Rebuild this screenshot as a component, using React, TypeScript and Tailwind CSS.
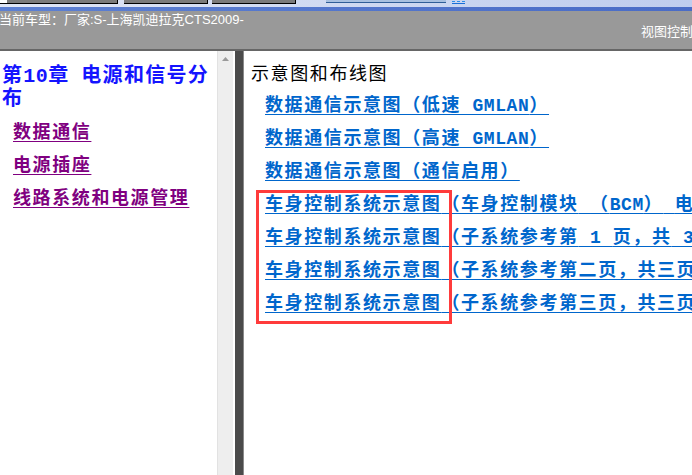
import React from "react";

// half-width latin runs use a fixed-width face, like the CJK system font does
function Lat({ children }: { children: React.ReactNode }) {
    return <span className="font-['Liberation_Mono',monospace] tracking-[0.6px] leading-none whitespace-pre">{children}</span>;
}

type Diagram = {
    main: React.ReactNode;
    rest?: React.ReactNode;
};

const diagrams: Diagram[] = [
    { main: <>数据通信示意图（低速<Lat> GMLAN</Lat>）</> },
    { main: <>数据通信示意图（高速<Lat> GMLAN</Lat>）</> },
    { main: <>数据通信示意图（通信启用）</> },
    { main: "车身控制系统示意图", rest: <>（车身控制模块<Lat> </Lat>（<Lat>BCM</Lat>）<Lat> </Lat>电源、搭铁和串行数据）</> },
    { main: "车身控制系统示意图", rest: <>（子系统参考第<Lat> 1 </Lat>页，共<Lat> 3 </Lat>页）</> },
    { main: "车身控制系统示意图", rest: <>（子系统参考第二页，共三页）</> },
    { main: "车身控制系统示意图", rest: <>（子系统参考第三页，共三页）</> },
];

const chapterLinks = ["数据通信", "电源插座", "线路系统和电源管理"];

export default function App() {
    return (
        <div className="w-[692px] h-[475px] overflow-hidden bg-white flex flex-col font-['Noto_Sans_CJK_SC',sans-serif]">

            {/* tab strip, only the bottoms of the tabs show */}
            <div className="h-[7px] flex items-start bg-gradient-to-r from-[#dfe5f4] to-[#bfcdee]">
                <div className="w-[7px] h-[4px] bg-white border-b border-black"></div>
                <div className="w-[111px] h-[4px] bg-[#7b7b7b] border-b border-r border-black"></div>
                <div className="ml-[6px] w-[84px] h-[4px] bg-[#7b7b7b] border-b border-r border-black"></div>
                <div className="ml-[4px] w-[84px] h-[4px] bg-[#7b7b7b] border-b border-r border-black"></div>
                <div className="ml-[30px] w-[120px] h-[3px] bg-[#a8c0e0] border-b border-[#2f5e98]"></div>
                <div className="ml-[6px] mt-[1px] flex flex-col gap-[1px]">
                    <div className="flex gap-[2px]">
                        <span className="w-[3px] h-[1px] bg-[#2d8ee8]"></span>
                        <span className="w-[3px] h-[1px] bg-[#2d8ee8]"></span>
                        <span className="w-[3px] h-[1px] bg-[#2d8ee8]"></span>
                    </div>
                    <div className="w-[13px] h-[1px] bg-[#1a6fd8]"></div>
                </div>
            </div>
            <div className="h-[4px] bg-gradient-to-r from-[#5d80d2] to-[#4a6cc6]"></div>

            {/* current vehicle bar */}
            <div className="h-[38px] bg-[#999999] text-white text-[13px] leading-[12px] pt-[3px] font-['Liberation_Sans','Noto_Sans_CJK_SC',sans-serif] overflow-hidden">
                <div className="-ml-px whitespace-nowrap">当前车型：厂家:S-上海凯迪拉克CTS2009-</div>
                <div className="pl-[641px] whitespace-nowrap">视图控制</div>
            </div>
            <div className="h-[2px] bg-[#666666]"></div>

            <div className="flex-1 flex min-h-0">

                {/* chapter tree */}
                <div className="w-[217px] pt-[11px] pl-[2px] overflow-hidden">
                    <h2 className="text-[20px] leading-[23px] font-bold tracking-[1.3px] text-[#1414ff]">
                        <div className="h-[23px] whitespace-nowrap">
                            第<span className="font-['Liberation_Mono',monospace] tracking-[0.5px] leading-none">10</span>章&nbsp;&nbsp;电源和信号分
                        </div>
                        <div className="h-[23px]">布</div>
                    </h2>
                    <ul className="mt-[6px] ml-[11px] text-[18px] leading-[33px] tracking-[1.6px] font-bold">
                        {chapterLinks.map((t) => (
                            <li key={t} className="h-[33px]">
                                <a className="text-[#800080] underline decoration-1 underline-offset-[3px]">{t}</a>
                            </li>
                        ))}
                    </ul>
                </div>

                {/* scrollbar */}
                <div className="w-[16px] bg-[#eeeeee] border-l border-[#e2e2e2] flex justify-center pt-[6px]">
                    <svg width="7" height="4" viewBox="0 0 7 4">
                        <polygon points="3.5,0 7,4 0,4" fill="#9a9a9a" />
                    </svg>
                </div>
                <div className="w-[2px] bg-white"></div>
                <div className="w-[8px] bg-[#4b4b4b]"></div>
                <div className="w-px bg-[#8a8a8a]"></div>

                {/* diagram list */}
                <div className="relative flex-1 min-w-0 overflow-hidden pt-[6px] pl-[7px] whitespace-nowrap">
                    <h3 className="h-[30px] text-[18px] leading-[30px] tracking-[1.6px] text-black">示意图和布线图</h3>
                    <ul className="ml-[14px] text-[18px] leading-[33px] tracking-[1.6px] font-bold text-[#0066cc]">
                        {diagrams.map((d, i) => (
                            <li key={i} className="h-[33px]">
                                <a className="underline decoration-1 underline-offset-[3px]">{d.main}</a>
                                {d.rest && <a className="underline decoration-1 underline-offset-[3px]">{d.rest}</a>}
                            </li>
                        ))}
                    </ul>
                    <div className="absolute left-[12px] top-[139px] w-[196px] h-[134px] border-[3px] border-[#ff3b3b]"></div>
                </div>
            </div>
        </div>
    );
}
